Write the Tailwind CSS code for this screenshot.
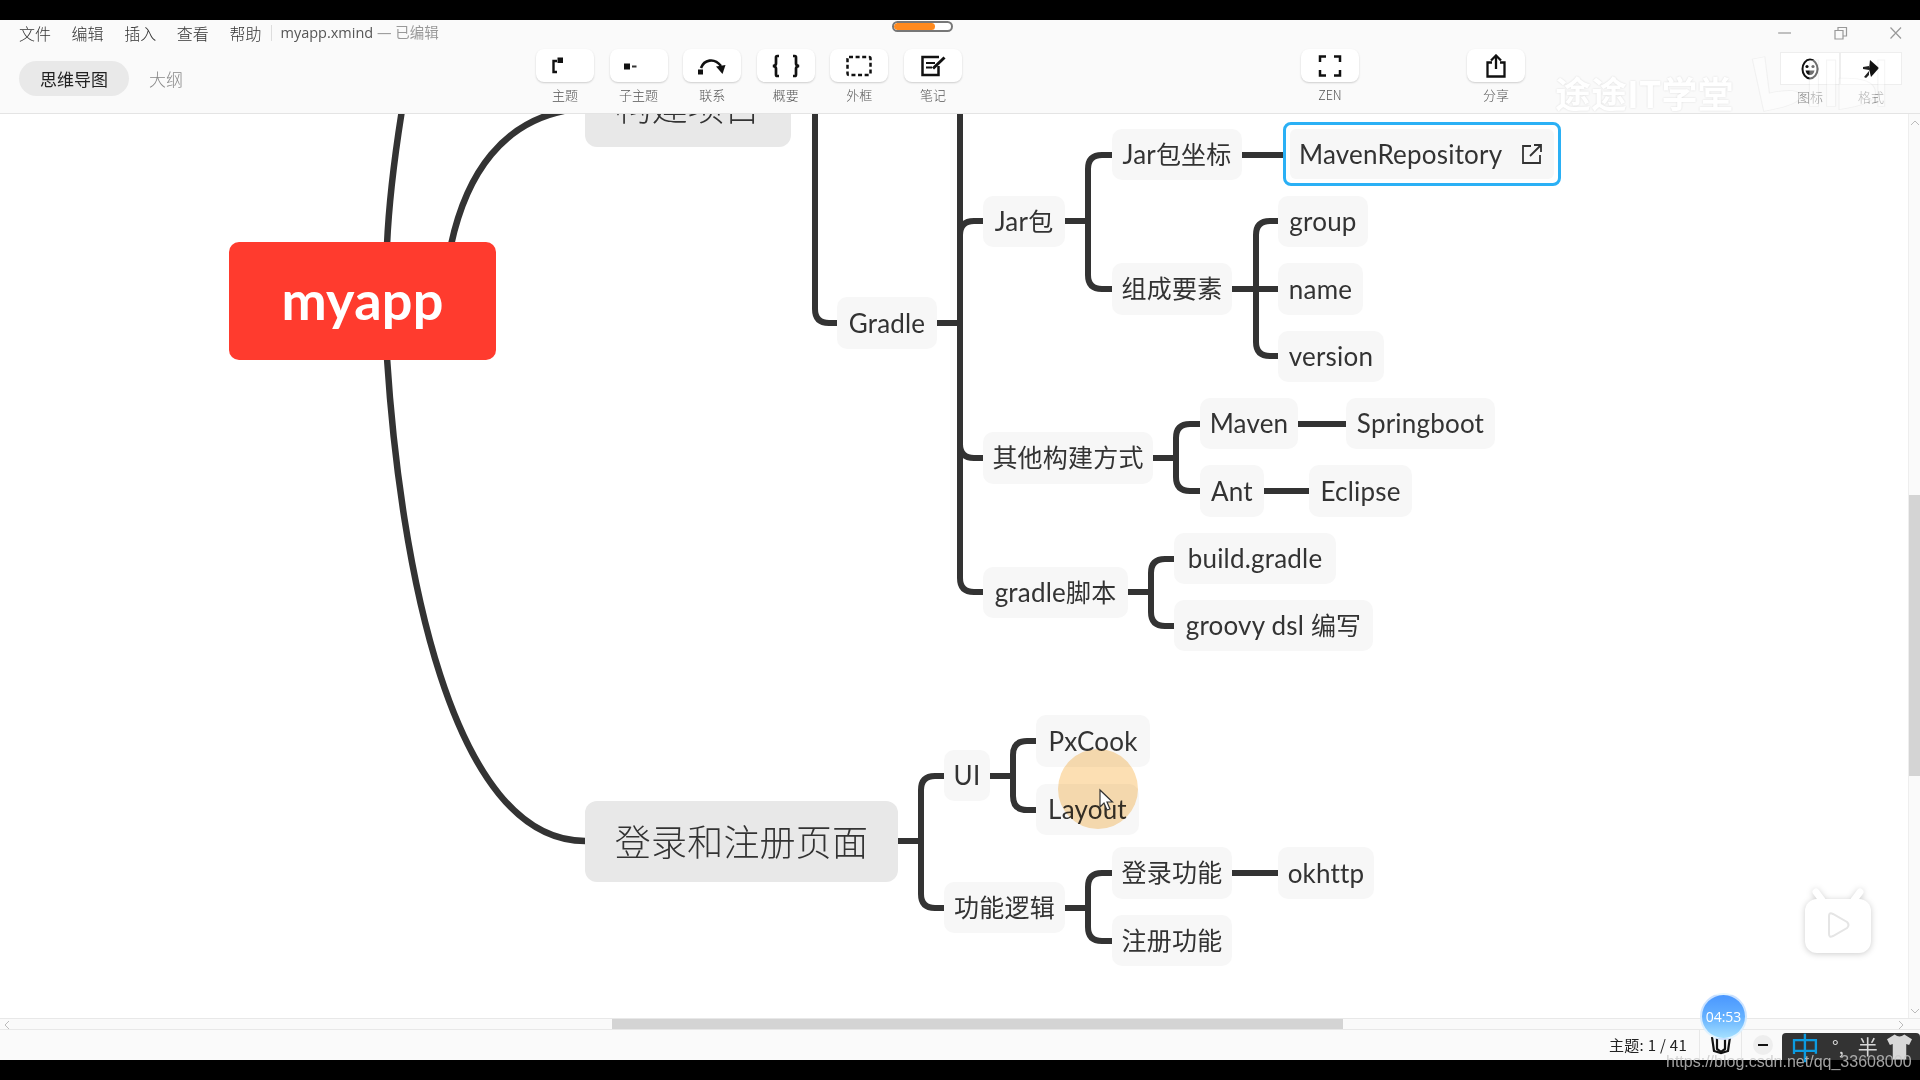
<!DOCTYPE html>
<html lang="zh-CN">
<head>
  <meta charset="UTF-8" />
  <title>myapp.xmind</title>
  <script src="https://cdn.jsdelivr.net/npm/@tailwindcss/browser@4"></script>
</head>
<body class="relative w-[1920px] h-[1080px] overflow-hidden flex flex-col bg-black font-['Noto_Sans_CJK_SC',sans-serif]">

  <!-- top letterbox -->
  <div class="h-5 shrink-0 bg-black"></div>

  <!-- header -->
  <header class="relative h-[94px] shrink-0 bg-[#fafafa] border-b border-[#e4e4e4] flex flex-col">
    <div class="h-[26px] flex items-center pl-[19px]">
      <nav class="flex gap-[20.6px] text-[16px] font-light text-[#333]">
        <span>文件</span><span>编辑</span><span>插入</span><span>查看</span><span>帮助</span>
      </nav>
      <span class="ml-[10px] mr-[8px] w-px h-4 bg-[#ddd]"></span>
      <span class="text-[14.5px] font-['Open_Sans','Noto_Sans_CJK_SC',sans-serif] text-[#555]">myapp.xmind <span class="text-[#999]">— 已编辑</span></span>
    </div>

    <!-- toolbar -->
    <div class="flex pl-[19px]">
      <div class="flex items-center gap-[20px] h-[35px] mt-[15px]">
        <span class="w-[110px] h-[35px] rounded-full bg-[#e9e9e9] flex items-center justify-center text-[17px] text-[#222]">思维导图</span>
        <span class="text-[17px] font-light text-[#888]">大纲</span>
      </div>

      <div class="ml-[353px] mt-[3px] flex gap-[15.6px]">
        <div class="w-[58px] flex flex-col items-center">
          <div class="w-[58px] h-[33px] rounded-[8px] bg-white shadow-[0_1px_2px_rgba(0,0,0,0.18)] flex items-center pl-[13px]">
            <svg width="20" height="20" viewBox="0 0 20 20" fill="none"><path d="M8 5H4.500v11H8" stroke="#111" stroke-width="2.400"/><rect x="8.500" y="1.500" width="5.500" height="5.500" fill="#111"/></svg>
          </div>
          <span class="mt-[3px] text-[13px] font-light text-[#555] leading-[20px]">主题</span>
        </div>
        <div class="w-[58px] flex flex-col items-center">
          <div class="w-[58px] h-[33px] rounded-[8px] bg-white shadow-[0_1px_2px_rgba(0,0,0,0.18)] flex items-center pl-[12px]">
            <svg width="20" height="20" viewBox="0 0 20 20"><rect x="2" y="7.500" width="6" height="6" fill="#111"/><rect x="10" y="9.500" width="4.500" height="2" fill="#333"/></svg>
          </div>
          <span class="mt-[3px] text-[13px] font-light text-[#555] leading-[20px]">子主题</span>
        </div>
        <div class="w-[58px] flex flex-col items-center">
          <div class="w-[58px] h-[33px] rounded-[8px] bg-white shadow-[0_1px_2px_rgba(0,0,0,0.18)] flex items-center justify-center">
            <svg width="30" height="22" viewBox="0 0 30 22" fill="none"><rect x="1" y="14.500" width="5" height="5" fill="#111"/><path d="M4 13C7 5 17 2 24 11" stroke="#111" stroke-width="2.600"/><path d="M19 11.500l9.500-1.500-3 9z" fill="#111"/></svg>
          </div>
          <span class="mt-[3px] text-[13px] font-light text-[#555] leading-[20px]">联系</span>
        </div>
        <div class="w-[58px] flex flex-col items-center">
          <div class="w-[58px] h-[33px] rounded-[8px] bg-white shadow-[0_1px_2px_rgba(0,0,0,0.18)] flex items-center justify-center">
            <svg width="30" height="24" viewBox="0 0 30 24" fill="none" stroke="#111" stroke-width="2.700"><path d="M8 2H6.200Q5 2 5 3.500V9.500Q5 11.500 2 12 5 12.500 5 14.500V20.500Q5 22 6.200 22H8"/><path d="M22 2H23.800Q25 2 25 3.500V9.500Q25 11.500 28 12 25 12.500 25 14.500V20.500Q25 22 23.800 22H22"/></svg>
          </div>
          <span class="mt-[3px] text-[13px] font-light text-[#555] leading-[20px]">概要</span>
        </div>
        <div class="w-[58px] flex flex-col items-center">
          <div class="w-[58px] h-[33px] rounded-[8px] bg-white shadow-[0_1px_2px_rgba(0,0,0,0.18)] flex items-center justify-center">
            <svg width="26" height="22" viewBox="0 0 26 22" fill="none"><rect x="1.500" y="2" width="23" height="18" rx="1.500" stroke="#111" stroke-width="2.500" stroke-dasharray="4 2.600"/></svg>
          </div>
          <span class="mt-[3px] text-[13px] font-light text-[#555] leading-[20px]">外框</span>
        </div>
        <div class="w-[58px] flex flex-col items-center">
          <div class="w-[58px] h-[33px] rounded-[8px] bg-white shadow-[0_1px_2px_rgba(0,0,0,0.18)] flex items-center justify-center">
            <svg width="26" height="22" viewBox="0 0 26 22" fill="none" stroke="#111" stroke-width="2.500"><path d="M19 2H2.500V20H18.500V11"/><path d="M6 8h9M6 12.500h6" stroke-width="2"/><path d="M13 13.500L24.500 2.500" stroke-width="3"/></svg>
          </div>
          <span class="mt-[3px] text-[13px] font-light text-[#555] leading-[20px]">笔记</span>
        </div>
      </div>

      <div class="ml-[339px] mt-[3px] w-[58px] flex flex-col items-center">
        <div class="w-[58px] h-[33px] rounded-[8px] bg-white shadow-[0_1px_2px_rgba(0,0,0,0.18)] flex items-center justify-center">
          <svg width="24" height="24" viewBox="0 0 24 24" fill="none" stroke="#111" stroke-width="2.500"><path d="M2 8V2.500H8M16 2.500H22V8M22 16V21.500H16M8 21.500H2V16"/></svg>
        </div>
        <span class="mt-[3px] text-[12.500px] font-light text-[#555] leading-[20px]">ZEN</span>
      </div>

      <div class="ml-[108px] mt-[3px] w-[58px] flex flex-col items-center">
        <div class="w-[58px] h-[33px] rounded-[8px] bg-white shadow-[0_1px_2px_rgba(0,0,0,0.18)] flex items-center justify-center">
          <svg width="22" height="24" viewBox="0 0 22 24" fill="none" stroke="#111" stroke-width="2.300"><path d="M7 8.500H2.500V22.500H19.500V8.500H15"/><path d="M11 15V2"/><path d="M6 6.500L11 1.500 16 6.500" fill="none"/></svg>
        </div>
        <span class="mt-[3px] text-[13px] font-light text-[#555] leading-[20px]">分享</span>
      </div>

      <div class="ml-[255px] mt-[6px] flex">
        <div class="w-[60px] flex flex-col items-center">
          <div class="w-[60px] h-[33px] border border-[#eee] bg-white flex items-center justify-center">
            <svg width="20" height="24" viewBox="0 0 20 24" fill="none"><ellipse cx="10" cy="12" rx="7.500" ry="9.500" stroke="#111" stroke-width="2"/><circle cx="7" cy="9.500" r="1.600" fill="#111"/><circle cx="13" cy="9.500" r="1.600" fill="#111"/><path d="M5.500 13.500H14.500Q13.500 18 10 18T5.500 13.500Z" fill="#111"/></svg>
          </div>
          <span class="mt-[2px] text-[13px] font-light text-[#888] leading-[20px]">图标</span>
        </div>
        <div class="w-[62px] flex flex-col items-center">
          <div class="w-[62px] h-[33px] border border-[#eee] bg-white flex items-center justify-center">
            <svg width="20" height="24" viewBox="0 0 20 24"><path d="M9 3L18 11 10 20 8 12z" fill="#111"/><path d="M2 10L8 9 8 13 2 12zM3 20L8 14 8 18 5 21z" fill="#222"/></svg>
          </div>
          <span class="mt-[2px] text-[13px] font-light text-[#888] leading-[20px]">格式</span>
        </div>
      </div>
    </div>

    <!-- progress pill, window controls and the video watermark lie over the header -->
    <div class="absolute left-[892px] top-px w-[61px] h-[11px] rounded-full border-[2.500px] border-[#777] bg-white overflow-hidden">
      <div class="w-[41px] h-full rounded-full bg-[#ff8a1f]"></div>
    </div>
    <svg class="absolute left-[1770px] top-[5px]" width="140" height="16" viewBox="0 0 140 16" fill="none" stroke="#999" stroke-width="1.200">
      <path d="M8 8H21"/>
      <path d="M65 5.500H73V14H65zM68 5.500V2.500H76.500V11H73"/>
      <path d="M120.500 2.500L131 13.500M131 2.500L120.500 13.500"/>
    </svg>
    <span class="absolute left-[1555px] top-[50px] text-[36px] leading-[44px] font-bold text-white [text-shadow:0_0_2px_rgba(0,0,0,0.14)]">途途IT学堂</span>
    <svg class="absolute left-[1750px] top-[35px] opacity-40" width="137" height="58" viewBox="0 0 120 70" preserveAspectRatio="none" fill="#fff" stroke="#000" stroke-opacity="0.1">
      <path d="M2 5L13 2 17 46Q44 38 44 50 44 60 12 68z"/>
      <path d="M52 6H60V62H52zM67 6H75V62H67zM78 28Q110 26 110 46 110 60 78 66zM112 6H118V62H112z"/>
    </svg>
  </header>

  <!-- canvas and vertical scrollbar -->
  <div class="flex h-[904px] shrink-0 bg-white">
    <main class="relative w-[1908px] h-[904px] overflow-hidden font-['Lato','Noto_Sans_CJK_SC',sans-serif] text-[26px] tracking-[0.2px] text-[#333]">
      <svg class="absolute inset-0" width="1908" height="904" viewBox="0 114 1908 904" fill="none" stroke="#333" stroke-width="6">
        <path d="M402 110C394 160 389 200 387 245M387 358C400 560 450 841 585 841" stroke-width="6.500"/>
        <path d="M451 245C465 180 500 114 585 108" stroke-width="6.500"/>
        <path d="M815 110V309Q815 323 829 323H837"/>
        <path d="M937 323H960M960 110V578Q960 592 974 592H983M960 235Q960 221 974 221H983M960 444Q960 458 974 458H983"/>
        <path d="M1065 221H1088M1112 155H1102Q1088 155 1088 169V275Q1088 289 1102 289H1112"/>
        <path d="M1242 155H1285"/>
        <path d="M1232 289H1278M1278 221H1270Q1256 221 1256 235V342Q1256 356 1270 356H1278"/>
        <path d="M1153 458H1176M1200 424H1190Q1176 424 1176 438V477Q1176 491 1190 491H1200"/>
        <path d="M1298 424H1346M1264 491H1309"/>
        <path d="M1128 592H1151M1174 559H1165Q1151 559 1151 573V612Q1151 626 1165 626H1174"/>
        <path d="M898 841H921M944 776H935Q921 776 921 790V894Q921 908 935 908H944"/>
        <path d="M990 776H1013M1036 741H1027Q1013 741 1013 755V796Q1013 810 1027 810H1036"/>
        <path d="M1065 908H1088M1112 873H1102Q1088 873 1088 887V927Q1088 941 1102 941H1112"/>
        <path d="M1232 873H1278"/>
      </svg>

      <!-- root and main topics -->
      <div class="absolute left-[229px] top-[128px] w-[267px] h-[118px] rounded-[10px] bg-[#ff3b2e] flex items-center justify-center pb-[3px] text-[54px] font-bold text-white">myapp</div>
      <div class="absolute left-[585px] top-[-48px] w-[206px] h-[81px] rounded-[12px] bg-[#e8e8e8] flex items-center justify-center text-[36px] font-light">构建项目</div>
      <div class="absolute left-[585px] top-[687px] w-[313px] h-[81px] rounded-[12px] bg-[#e8e8e8] flex items-center justify-center text-[36px] font-light">登录和注册页面</div>

      <!-- subtopics -->
      <div class="absolute left-[837px] top-[183px] w-[100px] h-[52px] rounded-[10px] bg-[#f7f7f7] flex items-center justify-center">Gradle</div>
      <div class="absolute left-[983px] top-[82px] w-[82px] h-[51px] rounded-[10px] bg-[#f7f7f7] flex items-center justify-center"><span>Jar<span class="text-[25px]">包</span></span></div>
      <div class="absolute left-[1112px] top-[15px] w-[130px] h-[51px] rounded-[10px] bg-[#f7f7f7] flex items-center justify-center"><span>Jar<span class="text-[25px]">包坐标</span></span></div>
      <div class="absolute left-[1283px] top-[8px] w-[278px] h-[64px] rounded-[8px] border-[3px] border-[#2ab0f5] bg-white p-[4px]">
        <div class="h-full rounded-[6px] bg-[#f7f7f7] flex items-center justify-between pl-[9px] pr-[10px]">
          <span>MavenRepository</span>
          <svg width="24" height="24" viewBox="0 0 24 24" fill="none" stroke="#333" stroke-width="1.800"><path d="M11 4H3V21H20V13"/><path d="M10 14L21 3M14 3H21V10"/></svg>
        </div>
      </div>
      <div class="absolute left-[1278px] top-[82px] w-[90px] h-[51px] rounded-[10px] bg-[#f7f7f7] flex items-center justify-center">group</div>
      <div class="absolute left-[1112px] top-[149px] w-[120px] h-[52px] rounded-[10px] bg-[#f7f7f7] flex items-center justify-center text-[25px]">组成要素</div>
      <div class="absolute left-[1278px] top-[149px] w-[85px] h-[52px] rounded-[10px] bg-[#f7f7f7] flex items-center justify-center">name</div>
      <div class="absolute left-[1278px] top-[217px] w-[106px] h-[51px] rounded-[10px] bg-[#f7f7f7] flex items-center justify-center">version</div>
      <div class="absolute left-[983px] top-[318px] w-[170px] h-[52px] rounded-[10px] bg-[#f7f7f7] flex items-center justify-center text-[25px]">其他构建方式</div>
      <div class="absolute left-[1200px] top-[284px] w-[98px] h-[51px] rounded-[10px] bg-[#f7f7f7] flex items-center justify-center">Maven</div>
      <div class="absolute left-[1346px] top-[284px] w-[149px] h-[51px] rounded-[10px] bg-[#f7f7f7] flex items-center justify-center">Springboot</div>
      <div class="absolute left-[1200px] top-[351px] w-[64px] h-[52px] rounded-[10px] bg-[#f7f7f7] flex items-center justify-center">Ant</div>
      <div class="absolute left-[1309px] top-[351px] w-[103px] h-[52px] rounded-[10px] bg-[#f7f7f7] flex items-center justify-center">Eclipse</div>
      <div class="absolute left-[983px] top-[453px] w-[145px] h-[51px] rounded-[10px] bg-[#f7f7f7] flex items-center justify-center"><span>gradle<span class="text-[25px]">脚本</span></span></div>
      <div class="absolute left-[1174px] top-[419px] w-[162px] h-[51px] rounded-[10px] bg-[#f7f7f7] flex items-center justify-center">build.gradle</div>
      <div class="absolute left-[1174px] top-[486px] w-[199px] h-[51px] rounded-[10px] bg-[#f7f7f7] flex items-center justify-center"><span>groovy dsl <span class="text-[25px]">编写</span></span></div>
      <div class="absolute left-[944px] top-[636px] w-[46px] h-[51px] rounded-[10px] bg-[#f7f7f7] flex items-center justify-center">UI</div>
      <div class="absolute left-[1036px] top-[601px] w-[114px] h-[52px] rounded-[10px] bg-[#f7f7f7] flex items-center justify-center">PxCook</div>
      <div class="absolute left-[1036px] top-[670px] w-[103px] h-[51px] rounded-[10px] bg-[#f7f7f7] flex items-center justify-center">Layout</div>
      <div class="absolute left-[944px] top-[768px] w-[121px] h-[51px] rounded-[10px] bg-[#f7f7f7] flex items-center justify-center text-[25px]">功能逻辑</div>
      <div class="absolute left-[1112px] top-[733px] w-[120px] h-[52px] rounded-[10px] bg-[#f7f7f7] flex items-center justify-center text-[25px]">登录功能</div>
      <div class="absolute left-[1278px] top-[733px] w-[96px] h-[52px] rounded-[10px] bg-[#f7f7f7] flex items-center justify-center">okhttp</div>
      <div class="absolute left-[1112px] top-[801px] w-[120px] h-[51px] rounded-[10px] bg-[#f7f7f7] flex items-center justify-center text-[25px]">注册功能</div>

      <!-- cursor highlight -->
      <div class="absolute left-[1058px] top-[635px] w-[80px] h-[80px] rounded-full bg-[#fcdfb3] mix-blend-multiply"></div>
      <svg class="absolute left-[1098px] top-[674px]" width="16" height="24" viewBox="0 0 16 24"><path d="M2 2V19L6 15 9 22 12 21 9 14H14.500z" fill="#fff" stroke="#333" stroke-width="1.200"/></svg>

      <!-- bilibili player badge -->
      <svg class="absolute left-[1800px] top-[774px] drop-shadow-[0_1px_3px_rgba(0,0,0,0.2)]" width="76" height="70" viewBox="0 0 76 70">
        <path d="M22 12L16 4M54 12L60 4" stroke="#fff" stroke-width="7" stroke-linecap="round"/>
        <rect x="5" y="11" width="66" height="54" rx="12" fill="#fff"/>
        <path d="M29 28Q29 24 33 26L47 34Q50 37 47 40L33 48Q29 50 29 46z" fill="#fff" stroke="#e5e5e5" stroke-width="2"/>
      </svg>
    </main>

    <aside class="relative w-3 bg-[#fafafa] border-l border-[#eee]">
      <svg class="absolute left-[1px] top-[5px]" width="10" height="8" viewBox="0 0 10 8" fill="none" stroke="#bbb"><path d="M1 6L5 2 9 6"/></svg>
      <div class="absolute left-0 top-[381px] w-full h-[281px] bg-[#d4d4d4]"></div>
      <svg class="absolute left-[1px] top-[893px]" width="10" height="8" viewBox="0 0 10 8" fill="none" stroke="#bbb"><path d="M1 2L5 6 9 2"/></svg>
    </aside>
  </div>

  <!-- horizontal scrollbar -->
  <div class="relative h-3 shrink-0 bg-[#fafafa] border-y border-[#e8e8e8]">
    <svg class="absolute left-[3px] top-px" width="8" height="10" viewBox="0 0 8 10" fill="none" stroke="#bbb"><path d="M6 1L2 5 6 9"/></svg>
    <div class="absolute left-[612px] top-0 w-[731px] h-full bg-[#d4d4d4]"></div>
    <svg class="absolute left-[1897px] top-px" width="8" height="10" viewBox="0 0 8 10" fill="none" stroke="#bbb"><path d="M2 1L6 5 2 9"/></svg>
  </div>

  <!-- status bar -->
  <footer class="h-[30px] shrink-0 bg-[#fafafa] flex items-center pl-[1609px]">
    <span class="w-[90px] text-[15px] tracking-[0.3px] text-[#222] font-['Noto_Sans_CJK_SC',sans-serif]">主题: 1 / 41</span>
    <span class="w-[43px] h-full border-x border-[#e8e8e8] flex items-center justify-center">
      <svg width="22" height="20" viewBox="0 0 22 20" fill="none" stroke="#111" stroke-width="2.200"><path d="M2 2L4 16 11 18 18 16 20 2"/><path d="M7 2V14L11 17 15 14V2"/></svg>
    </span>
    <span class="ml-[11px] w-5 h-5 rounded-full bg-[#eee] flex items-center justify-center"><span class="w-[10px] h-[2.500px] bg-[#111]"></span></span>
  </footer>

  <div class="h-5 shrink-0 bg-black"></div>

  <!-- things burnt into the recording, over the bottom of the window -->
  <div class="absolute left-[1700px] top-[993px] w-[47px] h-[47px] rounded-full border-2 border-white/70 bg-gradient-to-b from-[#4a97ff] via-[#64b0ff] to-[#a5e0ff] flex items-center justify-center text-[14px] text-white font-['Open_Sans',sans-serif]">04:53</div>
  <div class="absolute left-[1782px] top-[1033px] w-[138px] h-[27px] rounded-t-[4px] bg-[#333] flex items-center text-[#d8d8d8]">
    <span class="ml-[8px] w-[30px] text-[30px] leading-[27px] text-[#0c9be0]">中</span>
    <span class="ml-[12px] text-[18px] leading-[27px]">°,</span>
    <span class="ml-[14px] text-[20px] leading-[27px]">半</span>
    <svg class="ml-[9px]" width="25" height="27" viewBox="0 0 26 27"><path d="M8 1Q13 5 18 1L26 6 23 12 20 11V27H6V11L3 12 0 6z" fill="#d8d8d8"/></svg>
  </div>
  <span class="absolute left-[1666px] top-[1052px] text-[16px] leading-[20px] text-[#c8c8c8]/80 font-['Liberation_Sans',sans-serif]">https://blog.csdn.net/qq_33608000</span>
</body>
</html>
